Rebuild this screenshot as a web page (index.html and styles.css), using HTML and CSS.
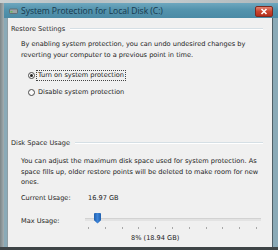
FILE: index.html
```html
<!DOCTYPE html>
<html>
<head>
<meta charset="utf-8">
<link rel="stylesheet" href="styles.css">
</head>
<body>
<div class="behind"></div>
<div class="screen">
  <div class="outside"></div>
  <div class="window">
    <div class="titlebar">
      <svg class="ticon" width="9" height="8" viewBox="0 0 9 8">
        <rect x="0.5" y="2" width="8" height="4.5" rx="1" fill="#9aa3a6" stroke="#5e6668" stroke-width="0.8"/>
        <rect x="1.5" y="4.2" width="2" height="1.2" fill="#5ec04a"/>
      </svg>
      <span class="title">System Protection for Local Disk (C:)</span>
      <div class="close">
        <svg width="8" height="7" viewBox="0 0 8 7"><path d="M1.5 1 L6.5 6 M6.5 1 L1.5 6" stroke="#fff" stroke-width="1.6"/></svg>
      </div>
    </div>
    <div class="frame">
      <div class="content">
        <div class="group-head"><span class="gh-text">Restore Settings</span><span class="rule"></span></div>
        <p class="para p1">By enabling system protection, you can undo undesired changes by<br>reverting your computer to a previous point in time.</p>
        <div class="radio-row r1"><span class="radio checked"></span><span class="label focus">Turn on system protection</span></div>
        <div class="radio-row r2"><span class="radio"></span><span class="label">Disable system protection</span></div>
        <div class="group-head g2"><span class="gh-text">Disk Space Usage</span><span class="rule"></span></div>
        <p class="para p2">You can adjust the maximum disk space used for system protection. As<br>space fills up, older restore points will be deleted to make room for new<br>ones.</p>
        <div class="usage-row cur"><span class="key">Current Usage:</span><span class="val">16.97 GB</span></div>
        <div class="usage-row max"><span class="key">Max Usage:</span>
          <div class="slider">
            <div class="track"></div>
            <div class="thumb" style="left: 9px"></div>
            <div class="ticks"><i></i><i></i><i></i><i></i><i></i><i></i><i></i><i></i><i></i><i></i><i></i></div>
          </div>
        </div>
        <div class="pct">8% (18.94 GB)</div>
      </div>
    </div>
  </div>
</div>
</body>
</html>
```
FILE: styles.css
```css
* { box-sizing: border-box; }
html, body { margin: 0; padding: 0; }
body {
  width: 278px;
  height: 250px;
  overflow: hidden;
  background: #3e4446;
  font-family: "DejaVu Sans", Tahoma, sans-serif;
  color: #1c1c1c;
}
.behind {
  height: 3px;
  background: linear-gradient(90deg, #c9d0d2 0%, #b7bfc2 30%, #c4cbcd 60%, #aeb7ba 100%);
}
.screen {
  display: flex;
  height: 244px;
}
.outside {
  width: 4px;
  background: linear-gradient(90deg, #7c8587, #a4aeb1);
}
.window {
  flex: 1;
  display: flex;
  flex-direction: column;
}
.titlebar {
  height: 15px;
  display: flex;
  align-items: center;
  background: linear-gradient(180deg, #6ea7be 0%, #5393ad 45%, #4a8aa5 100%);
  padding-left: 5px;
  padding-right: 5px;
}
.ticon { flex: none; margin-right: 3px; }
.title {
  font-family: "Open Sans", "DejaVu Sans", sans-serif;
  font-size: 8.6px;
  color: #17384d;
  flex: 1;
  white-space: nowrap;
  letter-spacing: -0.05px;
}
.close {
  width: 18px;
  height: 11px;
  margin-top: 1px;
  border-radius: 2px;
  background: linear-gradient(180deg, #e2826f 0%, #c9442e 50%, #b52f1c 100%);
  border: 1px solid #7e2a20;
  display: flex;
  align-items: center;
  justify-content: center;
}
.frame {
  flex: 1;
  display: flex;
  background: #8aaab7;
  padding: 0 5px 0 3px;
}
.content {
  flex: 1;
  background: #f0f0f0;
  border-right: 1px solid #4f5f66;
  border-left: 1px solid #8f9ea4;
  padding: 6px 0 0 3px;
  font-size: 6.6px;
  line-height: 10.5px;
  display: flex;
  flex-direction: column;
}
.group-head {
  display: flex;
  align-items: center;
  height: 10px;
}
.gh-text { color: #2a2a2a; white-space: nowrap; }
.rule {
  flex: 1;
  height: 2px;
  border-top: 1px solid #d5dfe5;
  border-bottom: 1px solid #ffffff;
  margin: 0 9px 0 5px;
}
.para {
  margin: 5px 0 0 10px;
  white-space: nowrap;
}
.radio-row {
  display: flex;
  align-items: center;
  height: 12px;
  margin-left: 17px;
}
.r1 { margin-top: 9px; }
.r2 { margin-top: 5px; }
.radio {
  width: 7px;
  height: 7px;
  border-radius: 50%;
  border: 1px solid #4b4b4b;
  background: #fafafa;
  margin-right: 1px;
  display: flex;
  align-items: center;
  justify-content: center;
}
.radio.checked::after {
  content: "";
  width: 3px;
  height: 3px;
  border-radius: 50%;
  background: #222;
}
.label { padding: 0 1px; border: 1px dotted transparent; line-height: 9px; }
.label.focus { border-color: #444; }
.g2 { margin-top: 40px; }
.p2 { margin-top: 8px; }
.usage-row {
  display: flex;
  align-items: center;
  margin-left: 10px;
  height: 12px;
}
.key { width: 67px; }
.cur { margin-top: 5px; }
.max { margin-top: 11px; }
.slider {
  position: relative;
  width: 176px;
  height: 20px;
  margin-left: -3px;
  margin-top: 2px;
}
.track {
  position: absolute;
  left: 0;
  right: 0;
  top: 5px;
  height: 3px;
  background: #e3e3e3;
  border-top: 1px solid #d2d2d2;
}
.thumb {
  position: absolute;
  top: 0;
  width: 7px;
  height: 11px;
  background: linear-gradient(90deg, #1f5fae, #3d84d8 50%, #1f5fae);
  clip-path: polygon(0 0, 100% 0, 100% 70%, 50% 100%, 0 70%);
  border-radius: 1px;
}
.ticks {
  position: absolute;
  left: 3px;
  right: 4px;
  top: 14px;
  display: flex;
  justify-content: space-between;
}
.ticks i {
  display: block;
  width: 1px;
  height: 2px;
  background: #a8a8a8;
}
.pct {
  margin-top: 5px;
  margin-left: 120px;
}
```
